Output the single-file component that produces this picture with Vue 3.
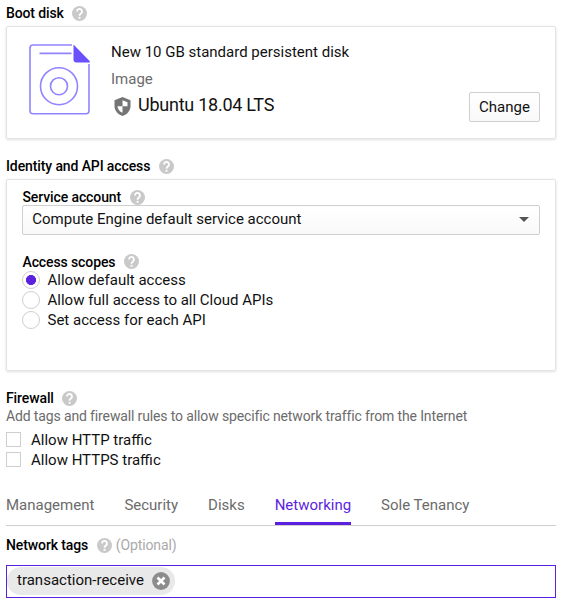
<script setup>
import { ref, h } from 'vue'

const scopes = ['Allow default access', 'Allow full access to all Cloud APIs', 'Set access for each API']
const selectedScope = ref(0)
const protocols = ['Allow HTTP traffic', 'Allow HTTPS traffic']
const tabs = ['Management', 'Security', 'Disks', 'Networking', 'Sole Tenancy']
const activeTab = ref('Networking')

const HelpIcon = () =>
  h('svg', { width: 15, height: 15, viewBox: '2 2 20 20' }, [
    h('circle', { cx: 12, cy: 12, r: 10, fill: '#c9c9c9' }),
    h('path', {
      d: 'M8.700 9.300a3.300 3.300 0 1 1 5.500 2.400c-1.300 1.100-2.200 1.600-2.200 3.400',
      fill: 'none',
      stroke: '#fff',
      'stroke-width': 2.4
    }),
    h('path', { d: 'M10.800 16.500h2.500v2.500h-2.500z', fill: '#fff' })
  ])
</script>

<template>
  <main class="page">
    <h2 class="label head-boot"><span>Boot disk</span><HelpIcon /></h2>
    <section class="card boot">
      <svg class="disk" width="62" height="72" viewBox="-0.500 -0.700 62 72" fill="none" stroke="#9184ff" stroke-width="1.600">
        <path d="M43.500 1.300H4.500Q1.500 1.300 1.500 4.300V67Q1.500 70 4.500 70H57.500Q60.500 70 60.500 67V20.300" />
        <path d="M11 9.700H43" />
        <circle cx="30.500" cy="42.500" r="18.500" />
        <circle cx="30.500" cy="42.500" r="8.500" />
        <path d="M45 0.800L61.300 17.500V18.800H48Q45 18.800 45 15.800Z" fill="#6a50ff" stroke="none" />
      </svg>
      <div class="info">
        <p class="title">New 10 GB standard persistent disk</p>
        <p class="kind">Image</p>
        <p class="os">
          <svg width="17" height="19" viewBox="0 0 17 19">
            <path d="M8.500 0L.5 3.200V9c0 4.700 3.400 8.500 8 10 4.600-1.500 8-5.300 8-10V3.200z" fill="#757575" />
            <path d="M8.500 3.300V9.300H13.500V5.300z" fill="#fff" />
            <path d="M8.500 9.300V15.800C5.600 14.600 3.800 12.200 3.400 9.300z" fill="#fff" />
          </svg>
          <span>Ubuntu 18.04 LTS</span>
        </p>
      </div>
      <button class="change">Change</button>
    </section>

    <h2 class="label head-identity"><span>Identity and API access</span><HelpIcon /></h2>
    <section class="card identity">
      <h3 class="label"><span>Service account</span><HelpIcon /></h3>
      <div class="select">
        <span>Compute Engine default service account</span>
        <svg width="10" height="5" viewBox="0 0 10 5"><path d="M0 0H10L5 5Z" fill="#555" /></svg>
      </div>
      <h3 class="label head-scopes"><span>Access scopes</span><HelpIcon /></h3>
      <div v-for="(scope, i) in scopes" :key="scope" class="option" @click="selectedScope = i">
        <span class="radio" :class="{ on: selectedScope === i }"></span>
        <span>{{ scope }}</span>
      </div>
    </section>

    <h2 class="label head-firewall"><span>Firewall</span><HelpIcon /></h2>
    <p class="hint">Add tags and firewall rules to allow specific network traffic from the Internet</p>
    <div v-for="p in protocols" :key="p" class="option check">
      <span class="box"></span>
      <span>{{ p }}</span>
    </div>

    <nav class="tabs">
      <a v-for="t in tabs" :key="t" class="tab" :class="{ active: t === activeTab }" @click="activeTab = t">{{ t }}</a>
    </nav>

    <h2 class="label head-tags"><span>Network tags</span><HelpIcon /><span class="optional">(Optional)</span></h2>
    <div class="tag-input">
      <span class="chip">
        <span class="chip-text">transaction-receive</span>
        <svg width="18" height="18" viewBox="0 0 18 18">
          <circle cx="9" cy="9" r="8.900" fill="#8c8c8c" />
          <path d="M5.500 5.500L12.500 12.500M12.500 5.500L5.500 12.500" stroke="#fff" stroke-width="2.600" />
        </svg>
      </span>
    </div>
  </main>
</template>

<style>
body {
  background: #fff;
}
</style>

<style scoped>
.page {
  box-sizing: border-box;
  width: 562px;
  padding: 0 6px;
  font-family: Roboto, sans-serif;
  font-size: 15px;
  line-height: 20px;
  color: #111;
  white-space: nowrap;
}
h2, h3, p {
  margin: 0;
}
svg {
  display: block;
  flex: none;
}
.label {
  display: flex;
  align-items: center;
  gap: 9px;
  height: 20px;
  font-size: 14px;
  font-weight: 500;
  letter-spacing: -0.11px;
  color: #000;
}
.card {
  box-sizing: border-box;
  border: 1px solid #e3e3e3;
  border-radius: 2px;
  box-shadow: 0 1px 3px rgba(0, 0, 0, 0.12);
}
.head-boot {
  gap: 8px;
  padding: 3px 0;
  letter-spacing: -0.13px;
}
.boot {
  display: flex;
  height: 113px;
  padding: 16px 15px 16px 21px;
}
.info {
  margin-left: 21px;
  flex: 1;
}
.title {
  margin-top: -1px;
}
.kind {
  margin-top: 7px;
  color: #6b6b6b;
}
.os {
  display: flex;
  align-items: center;
  gap: 7px;
  margin-top: 4px;
  padding-left: 3px;
  height: 24px;
  font-size: 18px;
  letter-spacing: -0.25px;
}
.os svg {
  margin-top: 3px;
}
.change {
  box-sizing: border-box;
  width: 71px;
  height: 30px;
  margin-top: 49px;
  padding: 0;
  border: 1px solid #cfcfcf;
  border-radius: 2px;
  background: linear-gradient(#fff, #f9f9f9);
  font: inherit;
  color: #111;
}
.head-identity {
  margin-top: 17px;
  margin-bottom: 3px;
}
.identity {
  height: 192px;
  padding: 7px 15px;
}
.identity .label {
  padding-left: 0.5px;
  gap: 8.5px;
}
.select {
  box-sizing: border-box;
  display: flex;
  align-items: center;
  justify-content: space-between;
  height: 30px;
  margin-top: -2px;
  padding: 0 10px 2px 9.3px;
  border: 1px solid #cfcfcf;
  border-radius: 2px;
  background: linear-gradient(#fff, #f9f9f9);
}
.head-scopes {
  margin-top: 18px;
  height: 17px;
}
.option {
  display: flex;
  align-items: center;
  gap: 7.5px;
  height: 20px;
}
.radio {
  box-sizing: border-box;
  width: 18px;
  height: 18px;
  border: 1px solid #cfcfcf;
  border-radius: 50%;
  background: #fff;
}
.radio.on {
  background: radial-gradient(circle, #5b1fdf 4.700px, #fff 5.300px);
}
.head-firewall {
  margin-top: 17px;
  gap: 8.5px;
}
.hint {
  height: 22px;
  margin-top: -2px;
  font-size: 14px;
  letter-spacing: -0.135px;
  color: #6b6b6b;
}
.check {
  gap: 10px;
}
.check:first-of-type {
  margin-top: 2px;
}
.box {
  box-sizing: border-box;
  width: 15px;
  height: 15px;
  margin-bottom: 1px;
  border: 1px solid #cfcfcf;
}
.tabs {
  display: flex;
  gap: 30px;
  height: 30px;
  margin-top: 25px;
  border-bottom: 1px solid #cfcfcf;
}
.tab {
  box-sizing: border-box;
  height: 30px;
  color: #6b6b6b;
}
.tab.active {
  color: #5b1fdf;
  border-bottom: 3px solid #5b1fdf;
}
.head-tags {
  margin-top: 9px;
}
.optional {
  margin-left: -5.5px;
  font-weight: 400;
  color: #aaa;
}
.tag-input {
  box-sizing: border-box;
  display: flex;
  height: 33px;
  margin-top: 10px;
  padding: 1px 0;
  border: 1px solid #5b1fdf;
}
.chip {
  box-sizing: border-box;
  display: flex;
  align-items: center;
  gap: 8px;
  height: 28px;
  padding: 0 5px 0 10px;
  border-radius: 14px;
  background: #e9e9e9;
}
.chip-text {
  margin-bottom: 2px;
}
</style>
